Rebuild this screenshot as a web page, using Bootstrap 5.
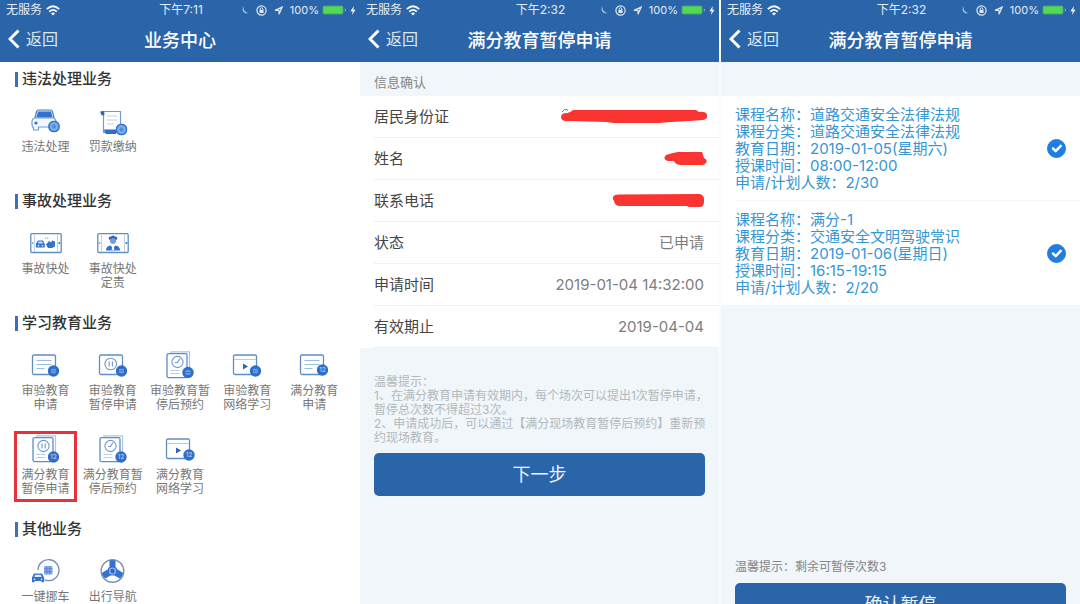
<!DOCTYPE html>
<html lang="zh-CN">
<head>
<meta charset="utf-8">
<meta name="viewport" content="width=device-width, initial-scale=1">
<title>满分教育暂停申请</title>
<link href="https://cdn.jsdelivr.net/npm/bootstrap@5.3.0/dist/css/bootstrap.min.css" rel="stylesheet">
<style>
  :root { --brand: #2b65a9; --page: #f0f6fa; --line: #eff2f4; --ink: #454545; --soft: #7d7d7d; --sky: #3596d4; }
  body { font-family: Inter, "Noto Sans CJK SC", sans-serif; background: var(--page); color: var(--ink); }
  .phone { aspect-ratio: 9 / 16; background: var(--page); }
  .phone-light { background: #fff; }
  .seam-end { border-right: 1px solid #fafcfd; }
  .seam-start { border-left: 1px solid #fafcfd; }
  .topbar { background: var(--brand); color: #fff; }
  .status { height: 20px; font-size: 12px; line-height: 20px; color: #e3ecf6; padding: 0 4px 0 6px; }
  .status .power { font-size: 11px; gap: 3px; }
  .titlebar { height: 42px; padding: 0 8px; }
  .titlebar h1 { font-size: 18px; line-height: 24px; font-weight: 500; }
  .back { font-size: 16px; line-height: 24px; color: #dfe9f4; gap: 6px; }
  .group-title { height: 34px; padding-left: 15px; font-size: 15px; line-height: 20px; font-weight: 500; color: #333; gap: 4px; }
  .group-title::before { content: ""; width: 3px; height: 15px; background: #3f70b5; }
  .tiles { padding: 0 12px 4px; }
  .tile { height: 84px; padding-top: 11px; color: #777; font-size: 12px; line-height: 14px; gap: 3px; }
  .tile svg { width: 32px; height: 30px; }
  .picked::after { content: ""; position: absolute; inset: 7px 2px 6px; border: 3px solid #e8323a; }
  .strip { height: 34px; padding: 5px 14px 0; font-size: 13px; line-height: 18px; color: #858585; }
  .info-row { height: 42px; margin-left: 14px; padding-right: 15px; font-size: 15px; line-height: 20px; border-bottom: 1px solid var(--line); }
  .info-row dt { font-weight: 400; }
  .info-row dd { color: var(--soft); }
  .tips { padding: 27px 0 8px 14px; font-size: 12px; line-height: 14px; color: #b3b8bb; }
  .actions { padding: 0 14px 14px; }
  .btn-main { --bs-btn-bg: #2b65a9; --bs-btn-color: #eef4fa; --bs-btn-hover-bg: #245791; --bs-btn-hover-color: #fff; height: 43px; font-size: 18px; line-height: 24px; padding: 0; border: 0; border-radius: 5px; }
  .course { padding: 10px 14px 9px 0; margin-left: 14px; font-size: 15px; line-height: 17px; color: var(--sky); border-bottom: 1px solid #f4f6f7; }
  .course .form-check-input { width: 19px; height: 19px; margin: 0; border-radius: 50%; }
  .course .form-check-input:checked { background-color: #1f7ee0; border-color: #1f7ee0; }
  .left-note { padding: 0 14px 7px; font-size: 12px; line-height: 18px; color: #858585; }
</style>
</head>
<body>
<svg class="d-none" aria-hidden="true">
  <symbol id="wifi" viewBox="0 0 14 11"><g fill="none" stroke="#f2f6fb" stroke-width="1.8"><path d="M.8 4.2Q7-1.8 13.2 4.2"/><path d="M3.2 6.7Q7 3 10.8 6.7"/></g><path d="M4.9 8.4Q7 6.5 9.1 8.4L7 10.6z" fill="#f2f6fb"/></symbol>
  <symbol id="moon" viewBox="0 0 8 10"><path d="M2.4 1C0 5 3 9.6 7.6 8 4.200 7.400 2 4.800 2.400 1z" fill="#a9c2df"/></symbol>
  <symbol id="lock" viewBox="0 0 11 11"><circle cx="5.500" cy="5.500" r="4.600" fill="none" stroke="#dce7f3" stroke-width="1.200"/><path d="M3.500 5h4v3h-4z" fill="#dce7f3"/><path d="M4.200 5V4a1.300 1.300 0 0 1 2.600 0v1" fill="none" stroke="#dce7f3"/></symbol>
  <symbol id="place" viewBox="0 0 9 9"><path d="M1 4.400 8.200 1 5 8.200V4.400z" fill="none" stroke="#dce7f3" stroke-width="1.200"/></symbol>
  <symbol id="battery" viewBox="0 0 25 10"><rect x=".5" y=".5" width="21" height="9" rx="2" fill="#4f9a7f"/><rect x="1.500" y="1.500" width="19" height="7" rx="1" fill="#4fdd50"/><path d="M22.800 3.500v3c1.600-.5 1.600-2.500 0-3z" fill="#8fb3cf"/></symbol>
  <symbol id="bolt" viewBox="0 0 6 9"><path d="M3.800 0 .4 5.200h2.200L2 9l3.600-5.200H3.400z" fill="#e8f0f8"/></symbol>
  <symbol id="chevron" viewBox="0 0 12 20"><path d="M10.500 1.500 2 10l8.500 8.500" fill="none" stroke="#fff" stroke-width="3"/></symbol>

  <!-- corner badges -->
  <symbol id="dot" viewBox="0 0 12 12"><circle cx="6" cy="6" r="5.700" fill="#2f6dc8"/><rect x="3.500" y="3.800" width="5" height="4.400" rx="1" fill="#6d9fe2"/><path d="M3.800 6h4.400" stroke="#2f6dc8" stroke-width=".8"/></symbol>
  <symbol id="twelve" viewBox="0 0 12 12"><circle cx="6" cy="6" r="5.700" fill="#2f6dc8"/><text x="6" y="8.200" font-size="6" font-weight="600" text-anchor="middle" fill="#a9c8f3">12</text></symbol>
  <symbol id="coin" viewBox="0 0 12 12"><circle cx="6" cy="6" r="5.200" fill="#7aaae8" stroke="#2f6dc8" stroke-width="1.400"/><path d="M6 3.500 8.200 6 6 8.500 3.800 6z" fill="#4d88da"/></symbol>

  <!-- frames shared by the lesson icons -->
  <symbol id="card-frame" viewBox="0 0 32 30"><rect x="2.500" y="4" width="23" height="19.500" rx="1.500" fill="#fff" stroke="#5f8dc6" stroke-width="1.300"/></symbol>
  <symbol id="page-frame" viewBox="0 0 32 30"><path d="M7 2V.8h18.500V24" fill="none" stroke="#a9c6ea" stroke-width="1.200"/><rect x="3" y="2.600" width="20" height="24" rx="1.500" fill="#fff" stroke="#5f8dc6" stroke-width="1.300"/><path d="M6.500 19.500h9M6.500 22.500h9" stroke="#b5cdec"/></symbol>

  <symbol id="car" viewBox="0 0 32 30"><path d="M5 11 6.500 4.500Q7 3 8.500 3h12q1.500 0 2 1.500L24 11" fill="#dce9fa" stroke="#4a80cb" stroke-width="1.200"/><path d="M6.500 10.500 8 4.500h13l1.500 6z" fill="#3472cf"/><path d="M4.500 11h19.500q2 1.500 2 4v6.500H21v-1.500H8.500V23H3.500v-2Q2 20 2 17.500V14q0-2 2.500-3z" fill="#f4f8fe" stroke="#6d9cda" stroke-width="1.200"/><circle cx="6" cy="16" r="1.600" fill="#3472cf"/><use href="#coin" x="18" y="13.500" width="12" height="12"/></symbol>
  <symbol id="bill" viewBox="0 0 32 30"><path d="M6.500 6v19.500h17V4.500H5" fill="#fff" stroke="#6d9cda" stroke-width="1.200"/><path d="M3.500 4.200h3.800v4H4.500q-1.500-2-1-4z" fill="#3565a8"/><path d="M10 9h10M10 13h10M10 17h7" stroke="#c0cde0" stroke-width="1.100"/><path d="M7 22.500h12V27H9q-2-1.500-2-4.500z" fill="#2f6dc8"/><use href="#coin" x="18.500" y="16.500" width="12" height="12"/></symbol>
  <symbol id="phone-car" viewBox="0 0 32 30"><rect x=".8" y="4.700" width="30.400" height="18.800" rx="1" fill="#fff" stroke="#5f8dc6" stroke-width="1.300"/><path d="M4.500 5v18M27.500 5v18" stroke="#bdd2ee"/><path d="M6 18.500v-4l2-3h5l1.800 3.500v3.500zM16 15.500l3-3.500 2 1.500 1-2 3 1v5l-3 1.500h-4z" fill="#3472cf"/><path d="M8.700 12.600h3.500l.8 1.800H8z" fill="#cfe0f7"/><circle cx="8.500" cy="16.800" r=".8" fill="#fff"/><circle cx="12.500" cy="16.800" r=".8" fill="#fff"/><path d="m15 10 1-1.500M17.500 10l.5-1.500" stroke="#7aa5de"/><circle cx="2.700" cy="14" r=".8" fill="#3472cf"/><circle cx="29.400" cy="14" r="1" fill="#3472cf"/></symbol>
  <symbol id="phone-cop" viewBox="0 0 32 30"><rect x=".8" y="4.700" width="30.400" height="18.800" rx="1" fill="#fff" stroke="#5f8dc6" stroke-width="1.300"/><path d="M4.500 5v18M27.500 5v18" stroke="#bdd2ee"/><path d="M11.500 8.500 16 6.500l4.500 2-1 2.500h-7z" fill="#2f62b0"/><circle cx="16" cy="12" r="3" fill="#6d9fe2"/><path d="M9 21.500q0-4.500 4.500-5L16 19l2.500-2.500q4.500.5 4.500 5z" fill="#3472cf"/><path d="M15.300 17h1.400l.6 4h-2.600z" fill="#fff"/><circle cx="2.700" cy="14" r=".8" fill="#3472cf"/><circle cx="29.400" cy="14" r="1" fill="#3472cf"/></symbol>
  <symbol id="lines" viewBox="0 0 32 30"><use href="#card-frame"/><path d="M6.500 9.500h15M6.500 13.500h15M6.500 17.500h8" stroke="#9dbce2" stroke-width="1.100"/></symbol>
  <symbol id="pause" viewBox="0 0 32 30"><use href="#card-frame"/><g fill="none" stroke="#7097cc" stroke-width="1.100"><circle cx="13.700" cy="13" r="5.800"/><path d="M12.200 10.500v5M15.400 10.500v5"/></g></symbol>
  <symbol id="video" viewBox="0 0 32 30"><use href="#card-frame"/><path d="M3 8.500h22" stroke="#b5cdec"/><path d="M12 12.500v6l5-3z" fill="#2f62b8"/></symbol>
  <symbol id="page-clock" viewBox="0 0 32 30"><use href="#page-frame"/><g fill="none" stroke="#7097cc" stroke-width="1.100"><circle cx="13.500" cy="11" r="5.600"/><path d="m16 7.500-2.500 4H11"/></g></symbol>
  <symbol id="page-pause" viewBox="0 0 32 30"><use href="#page-frame"/><g fill="none" stroke="#7097cc" stroke-width="1.100"><circle cx="13.500" cy="11" r="5.600"/><path d="M12 8.500v5M15.200 8.500v5"/></g></symbol>
  <symbol id="move-car" viewBox="0 0 32 30"><path d="M8 13a10.500 10.500 0 1 1 6.500 9.800" fill="none" stroke="#7590b8" stroke-width="1.400"/><path d="M14 9h8.500v8.500H14z" fill="#8fb0ea"/><path d="M14 11.800h8.500M14 14.700h8.500M16.800 9v8.500M19.700 9v8.500" stroke="#5b82cc"/><path d="M2 20.500 4 16.500h8l2 4v4.800h-2.500v-1.200h-7v1.200H2z" fill="#3472cf"/><path d="m4.300 20 1-2.300h5.400l1 2.300z" fill="#dfeafa"/><circle cx="4.500" cy="22.300" r=".8" fill="#fff"/><circle cx="11.500" cy="22.300" r=".8" fill="#fff"/></symbol>
  <symbol id="wheel" viewBox="0 0 32 30"><circle cx="15.500" cy="14" r="11.300" fill="#fff" stroke="#7c91b3" stroke-width="1.400"/><path d="M12.500 3.600q3-1 6 0V9.500l2 3 5.800 3.500q-.8 3-3.500 5.500L17.500 18.500h-4L8.200 21.500Q5.500 19 4.700 16l5.800-3.500 2-3z" fill="#3472cf"/><circle cx="15.500" cy="14" r="3.600" fill="#8db5ee"/><circle cx="15.500" cy="14" r="2.200" fill="#2f62b8"/></symbol>
</svg>

<main class="row g-0 vh-100 overflow-hidden">
  <!-- service centre -->
  <section class="col-4 phone phone-light">
    <header class="topbar">
      <div class="status d-flex align-items-center">
        <div class="d-flex flex-fill align-items-center w-25 gap-1"><span>无服务</span><svg width="14" height="11"><use href="#wifi"/></svg></div>
        <span>下午7:11</span>
        <div class="d-flex flex-fill align-items-center justify-content-end w-25 power">
          <svg width="8" height="10" class="me-1"><use href="#moon"/></svg><svg width="11" height="11" class="me-1"><use href="#lock"/></svg><svg width="9" height="9" class="me-1"><use href="#place"/></svg><span>100%</span><svg width="25" height="10"><use href="#battery"/></svg><svg width="6" height="9"><use href="#bolt"/></svg>
        </div>
      </div>
      <nav class="titlebar d-flex align-items-center">
        <div class="flex-fill w-25"><a href="#" class="back d-inline-flex align-items-center text-decoration-none"><svg width="12" height="20"><use href="#chevron"/></svg>返回</a></div>
        <h1 class="m-0">业务中心</h1>
        <div class="flex-fill w-25"></div>
      </nav>
    </header>

    <h2 class="group-title d-flex align-items-center m-0">违法处理业务</h2>
    <div class="tiles row row-cols-5 g-0">
      <a href="#" class="tile col d-flex flex-column align-items-center text-center text-nowrap text-decoration-none"><svg><use href="#car"/></svg><span>违法处理</span></a>
      <a href="#" class="tile col d-flex flex-column align-items-center text-center text-nowrap text-decoration-none"><svg><use href="#bill"/></svg><span>罚款缴纳</span></a>
    </div>

    <h2 class="group-title d-flex align-items-center m-0">事故处理业务</h2>
    <div class="tiles row row-cols-5 g-0">
      <a href="#" class="tile col d-flex flex-column align-items-center text-center text-nowrap text-decoration-none"><svg><use href="#phone-car"/></svg><span>事故快处</span></a>
      <a href="#" class="tile col d-flex flex-column align-items-center text-center text-nowrap text-decoration-none"><svg><use href="#phone-cop"/></svg><span>事故快处<br>定责</span></a>
    </div>

    <h2 class="group-title d-flex align-items-center m-0">学习教育业务</h2>
    <div class="tiles row row-cols-5 g-0">
      <a href="#" class="tile col d-flex flex-column align-items-center text-center text-nowrap text-decoration-none"><svg><use href="#lines"/><use href="#dot" x="17.500" y="14" width="12" height="12"/></svg><span>审验教育<br>申请</span></a>
      <a href="#" class="tile col d-flex flex-column align-items-center text-center text-nowrap text-decoration-none"><svg><use href="#pause"/><use href="#dot" x="18.500" y="14" width="12" height="12"/></svg><span>审验教育<br>暂停申请</span></a>
      <a href="#" class="tile col d-flex flex-column align-items-center text-center text-nowrap text-decoration-none"><svg><use href="#page-clock"/><use href="#dot" x="18" y="15.500" width="12" height="12"/></svg><span>审验教育暂<br>停后预约</span></a>
      <a href="#" class="tile col d-flex flex-column align-items-center text-center text-nowrap text-decoration-none"><svg><use href="#video"/><use href="#dot" x="18.500" y="14" width="12" height="12"/></svg><span>审验教育<br>网络学习</span></a>
      <a href="#" class="tile col d-flex flex-column align-items-center text-center text-nowrap text-decoration-none"><svg><use href="#lines"/><use href="#twelve" x="18.500" y="13" width="12" height="12"/></svg><span>满分教育<br>申请</span></a>
      <a href="#" class="tile picked position-relative col d-flex flex-column align-items-center text-center text-nowrap text-decoration-none"><svg><use href="#page-pause"/><use href="#twelve" x="17.500" y="16" width="12" height="12"/></svg><span>满分教育<br>暂停申请</span></a>
      <a href="#" class="tile col d-flex flex-column align-items-center text-center text-nowrap text-decoration-none"><svg><use href="#page-clock"/><use href="#twelve" x="18" y="16" width="12" height="12"/></svg><span>满分教育暂<br>停后预约</span></a>
      <a href="#" class="tile col d-flex flex-column align-items-center text-center text-nowrap text-decoration-none"><svg><use href="#video"/><use href="#twelve" x="19" y="14" width="12" height="12"/></svg><span>满分教育<br>网络学习</span></a>
    </div>

    <h2 class="group-title d-flex align-items-center m-0">其他业务</h2>
    <div class="tiles row row-cols-5 g-0">
      <a href="#" class="tile col d-flex flex-column align-items-center text-center text-nowrap text-decoration-none"><svg><use href="#move-car"/></svg><span>一键挪车</span></a>
      <a href="#" class="tile col d-flex flex-column align-items-center text-center text-nowrap text-decoration-none"><svg><use href="#wheel"/></svg><span>出行导航</span></a>
    </div>
  </section>

  <!-- applicant details -->
  <section class="col-4 phone seam-end">
    <header class="topbar">
      <div class="status d-flex align-items-center">
        <div class="d-flex flex-fill align-items-center w-25 gap-1"><span>无服务</span><svg width="14" height="11"><use href="#wifi"/></svg></div>
        <span>下午2:32</span>
        <div class="d-flex flex-fill align-items-center justify-content-end w-25 power">
          <svg width="8" height="10" class="me-1"><use href="#moon"/></svg><svg width="11" height="11" class="me-1"><use href="#lock"/></svg><svg width="9" height="9" class="me-1"><use href="#place"/></svg><span>100%</span><svg width="25" height="10"><use href="#battery"/></svg><svg width="6" height="9"><use href="#bolt"/></svg>
        </div>
      </div>
      <nav class="titlebar d-flex align-items-center">
        <div class="flex-fill w-25"><a href="#" class="back d-inline-flex align-items-center text-decoration-none"><svg width="12" height="20"><use href="#chevron"/></svg>返回</a></div>
        <h1 class="m-0 text-nowrap">满分教育暂停申请</h1>
        <div class="flex-fill w-25"></div>
      </nav>
    </header>

    <h2 class="strip d-flex align-items-center fw-normal m-0">信息确认</h2>
    <dl class="bg-white m-0">
      <div class="info-row d-flex align-items-center justify-content-between"><dt>居民身份证</dt><dd class="m-0 d-flex"><svg class="overflow-visible" width="144" height="16" role="img" aria-label="已遮盖"><path d="M2 3q2-4 6-2" fill="none" stroke="#777"/><path d="M5 4Q9 5 13 1H136l3 2q7-1 8 3t-4 5l-14 1-18 1-12 1H54L46 13 10 12Q1 13 1 8q0-3 4-4z" fill="#f93431"/></svg></dd></div>
      <div class="info-row d-flex align-items-center justify-content-between"><dt>姓名</dt><dd class="m-0 d-flex"><svg class="overflow-visible" width="40" height="16" role="img" aria-label="已遮盖"><path d="M2 4 9 2l5-1h24l2 6q4 2 2 5-1 2-4 2H16q-5-1-6-4H4Q-2 8 2 4z" fill="#f93431"/></svg></dd></div>
      <div class="info-row d-flex align-items-center justify-content-between"><dt>联系电话</dt><dd class="m-0 d-flex"><svg class="overflow-visible" width="92" height="16" role="img" aria-label="已遮盖"><path d="M3 2l4-.5L88 1q5 2 4 7 0 6-4 6H77l-2-1H8Q3 13 2 8-1 4 3 2z" fill="#f93431"/></svg></dd></div>
      <div class="info-row d-flex align-items-center justify-content-between"><dt>状态</dt><dd class="m-0">已申请</dd></div>
      <div class="info-row d-flex align-items-center justify-content-between"><dt>申请时间</dt><dd class="m-0">2019-01-04 14:32:00</dd></div>
      <div class="info-row d-flex align-items-center justify-content-between"><dt>有效期止</dt><dd class="m-0">2019-04-04</dd></div>
    </dl>
    <p class="tips text-nowrap m-0">温馨提示：<br>1、在满分教育申请有效期内，每个场次可以提出1次暂停申请，<br>暂停总次数不得超过3次。<br>2、申请成功后，可以通过【满分现场教育暂停后预约】重新预<br>约现场教育。</p>
    <div class="actions"><button type="button" class="btn btn-main w-100">下一步</button></div>
  </section>

  <!-- course choice -->
  <section class="col-4 phone seam-start d-flex flex-column">
    <header class="topbar">
      <div class="status d-flex align-items-center">
        <div class="d-flex flex-fill align-items-center w-25 gap-1"><span>无服务</span><svg width="14" height="11"><use href="#wifi"/></svg></div>
        <span>下午2:32</span>
        <div class="d-flex flex-fill align-items-center justify-content-end w-25 power">
          <svg width="8" height="10" class="me-1"><use href="#moon"/></svg><svg width="11" height="11" class="me-1"><use href="#lock"/></svg><svg width="9" height="9" class="me-1"><use href="#place"/></svg><span>100%</span><svg width="25" height="10"><use href="#battery"/></svg><svg width="6" height="9"><use href="#bolt"/></svg>
        </div>
      </div>
      <nav class="titlebar d-flex align-items-center">
        <div class="flex-fill w-25"><a href="#" class="back d-inline-flex align-items-center text-decoration-none"><svg width="12" height="20"><use href="#chevron"/></svg>返回</a></div>
        <h1 class="m-0 text-nowrap">满分教育暂停申请</h1>
        <div class="flex-fill w-25"></div>
      </nav>
    </header>

    <div class="strip"></div>
    <div class="bg-white">
      <label class="course d-flex align-items-center justify-content-between">
        <span>课程名称：道路交通安全法律法规<br>课程分类：道路交通安全法律法规<br>教育日期：2019-01-05(星期六)<br>授课时间：08:00-12:00<br>申请/计划人数：2/30</span>
        <input class="form-check-input" type="checkbox" checked>
      </label>
      <label class="course d-flex align-items-center justify-content-between border-0">
        <span>课程名称：满分-1<br>课程分类：交通安全文明驾驶常识<br>教育日期：2019-01-06(星期日)<br>授课时间：16:15-19:15<br>申请/计划人数：2/20</span>
        <input class="form-check-input" type="checkbox" checked>
      </label>
    </div>
    <div class="mt-auto">
      <p class="left-note m-0">温馨提示：剩余可暂停次数3</p>
      <div class="actions"><button type="button" class="btn btn-main w-100">确认暂停</button></div>
    </div>
  </section>
</main>
<script src="https://cdn.jsdelivr.net/npm/bootstrap@5.3.0/dist/js/bootstrap.bundle.min.js"></script>
</body>
</html>
